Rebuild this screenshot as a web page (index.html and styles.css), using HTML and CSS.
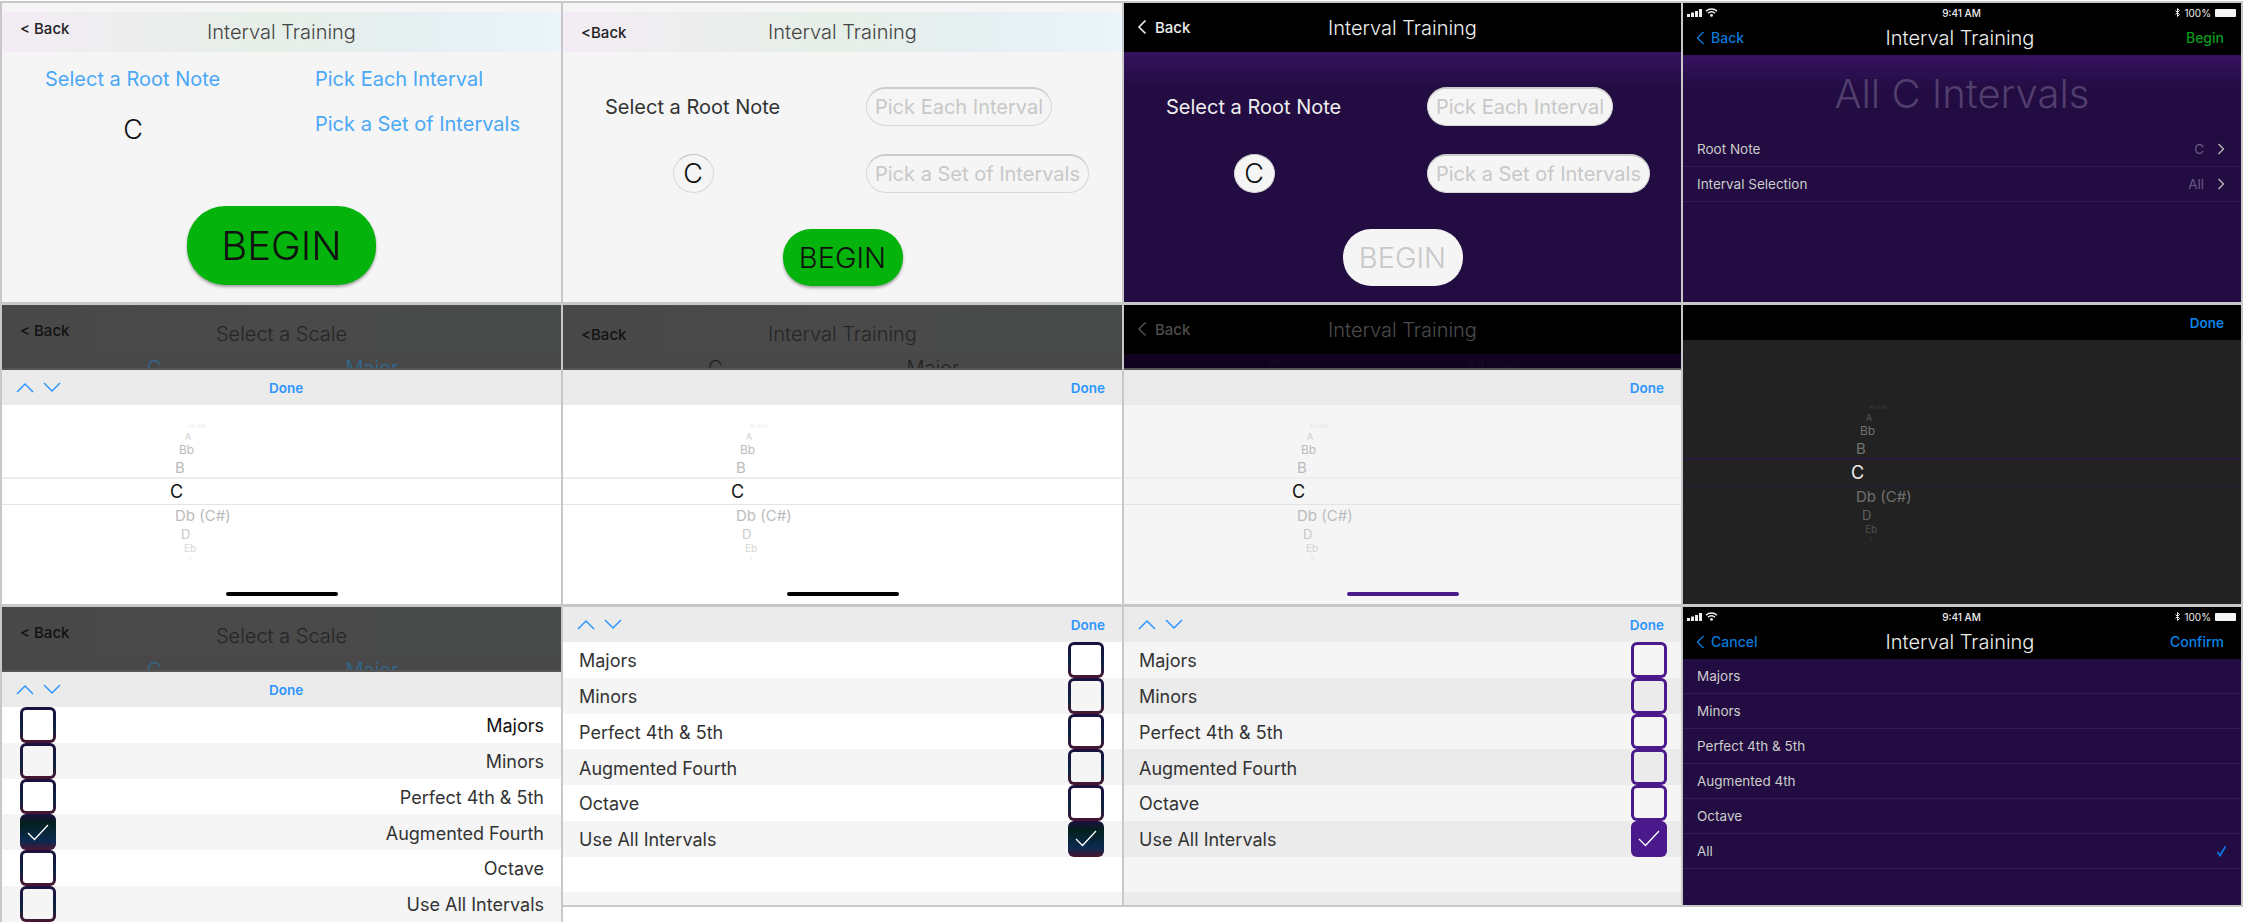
FILE: index.html
```html
<!DOCTYPE html>
<html lang="en">
<head>
    <meta charset="UTF-8">
    <meta name="viewport" content="width=device-width, initial-scale=1.0">
    <title>Interval Training Screens</title>
    <link rel="stylesheet" href="styles.css">
</head>
<body>
<div class="board">

    <!-- row 1: setup screens -->
    <section class="screen light">
        <div class="nav nav-tint">
            <span class="back back-high">&lt; Back</span>
            <span class="title">Interval Training</span>
        </div>
        <div class="setup setup-plain">
            <span class="setup-link">Select a Root Note</span>
            <span class="setup-link">Pick Each Interval</span>
            <span class="note">C</span>
            <span class="setup-link">Pick a Set of Intervals</span>
        </div>
        <div class="begin begin-big">BEGIN</div>
    </section>

    <section class="screen light">
        <div class="nav nav-tint">
            <span class="back">&lt;Back</span>
            <span class="title">Interval Training</span>
        </div>
        <div class="setup">
            <span class="setup-label">Select a Root Note</span>
            <span class="pill">Pick Each Interval</span>
            <span class="note note-round">C</span>
            <span class="pill">Pick a Set of Intervals</span>
        </div>
        <div class="begin">BEGIN</div>
    </section>

    <section class="screen purple">
        <div class="nav nav-black">
            <span class="back back-icon">
                <svg class="chevron-back" width="10" height="16" viewBox="0 0 10 16"><path d="M8.5 1.5 2 8l6.5 6.5"/></svg>
                Back
            </span>
            <span class="title">Interval Training</span>
        </div>
        <div class="setup setup-dark">
            <span class="setup-label">Select a Root Note</span>
            <span class="pill">Pick Each Interval</span>
            <span class="note note-round">C</span>
            <span class="pill">Pick a Set of Intervals</span>
        </div>
        <div class="begin begin-off">BEGIN</div>
    </section>

    <section class="screen ios">
        <div class="status">
            <span class="status-left">
                <svg width="15" height="8" viewBox="0 0 15 8"><rect x="0" y="5" width="3" height="3"/><rect x="4" y="3.5" width="3" height="4.5"/><rect x="8" y="2" width="3" height="6"/><rect x="12" y="0" width="3" height="8"/></svg>
                <svg class="wifi" width="13" height="9" viewBox="0 0 13 9"><path d="M1 3.2C4 .4 9 .4 12 3.2M3 5.2c2-1.8 5-1.8 7 0"/><circle cx="6.5" cy="7.4" r="1.4"/></svg>
            </span>
            <span class="status-time">9:41 AM</span>
            <span class="status-right">
                <svg class="bt" width="5" height="9" viewBox="0 0 5 9"><path d="M.5 2.5l4 4-2 2V.5l2 2-4 4"/></svg>
                100%
                <span class="battery"></span>
            </span>
        </div>
        <div class="nav nav-ios">
            <span class="nav-link">
                <svg class="chevron-ios" width="9" height="14" viewBox="0 0 9 14"><path d="M7.5 1 1.5 7l6 6"/></svg>
                Back
            </span>
            <span class="title">Interval Training</span>
            <span class="nav-action nav-green">Begin</span>
        </div>
        <div class="ios-fill ios-grad">
            <h1 class="summary">All C Intervals</h1>
            <div class="setting">
                <span>Root Note</span>
                <span class="setting-value">C <svg class="chevron-right" width="8" height="12" viewBox="0 0 8 12"><path d="M1.5 1l5 5-5 5"/></svg></span>
            </div>
            <div class="setting">
                <span>Interval Selection</span>
                <span class="setting-value">All <svg class="chevron-right" width="8" height="12" viewBox="0 0 8 12"><path d="M1.5 1l5 5-5 5"/></svg></span>
            </div>
        </div>
    </section>

    <!-- row 2: root note pickers -->
    <section class="screen light">
        <div class="dim">
            <div class="nav nav-dim">
                <span class="back back-high">&lt; Back</span>
                <span class="title">Select a Scale</span>
            </div>
            <div class="peek peek-blue"><span>C</span><span>Major</span></div>
        </div>
        <div class="toolbar toolbar-mid">
            <span class="arrows">
                <svg width="18" height="11" viewBox="0 0 18 11"><path d="M1 10 9 2l8 8"/></svg>
                <svg width="18" height="11" viewBox="0 0 18 11"><path d="M1 1l8 8 8-8"/></svg>
            </span>
            <span class="done">Done</span>
        </div>
        <div class="wheel">
            <span class="tick-far">Ab (G#)</span>
            <span class="tick-a">A</span>
            <span class="tick-bb">Bb</span>
            <span class="tick-b">B</span>
            <span class="tick-c">C</span>
            <span class="tick-db">Db (C#)</span>
            <span class="tick-d">D</span>
            <span class="tick-eb">Eb</span>
            <span class="tick-end">E</span>
            <span class="home-bar"></span>
        </div>
    </section>

    <section class="screen light">
        <div class="dim">
            <div class="nav nav-dim">
                <span class="back">&lt;Back</span>
                <span class="title">Interval Training</span>
            </div>
            <div class="peek"><span>C</span><span>Major</span></div>
        </div>
        <div class="toolbar">
            <span class="done">Done</span>
        </div>
        <div class="wheel">
            <span class="tick-far">Ab (G#)</span>
            <span class="tick-a">A</span>
            <span class="tick-bb">Bb</span>
            <span class="tick-b">B</span>
            <span class="tick-c">C</span>
            <span class="tick-db">Db (C#)</span>
            <span class="tick-d">D</span>
            <span class="tick-eb">Eb</span>
            <span class="tick-end">E</span>
            <span class="home-bar"></span>
        </div>
    </section>

    <section class="screen purple">
        <div class="dim dim-black">
            <div class="nav nav-black nav-faded">
                <span class="back back-icon">
                    <svg class="chevron-back" width="10" height="16" viewBox="0 0 10 16"><path d="M8.5 1.5 2 8l6.5 6.5"/></svg>
                    Back
                </span>
                <span class="title">Interval Training</span>
            </div>
            <div class="peek peek-night"><span>C</span><span>Major</span></div>
        </div>
        <div class="toolbar">
            <span class="done">Done</span>
        </div>
        <div class="wheel wheel-grey">
            <span class="tick-far">Ab (G#)</span>
            <span class="tick-a">A</span>
            <span class="tick-bb">Bb</span>
            <span class="tick-b">B</span>
            <span class="tick-c">C</span>
            <span class="tick-db">Db (C#)</span>
            <span class="tick-d">D</span>
            <span class="tick-eb">Eb</span>
            <span class="tick-end">E</span>
            <span class="home-bar home-bar-purple"></span>
        </div>
    </section>

    <section class="screen ios">
        <div class="toolbar toolbar-black">
            <span class="done">Done</span>
        </div>
        <div class="wheel wheel-dark">
            <span class="tick-far">Ab (G#)</span>
            <span class="tick-a">A</span>
            <span class="tick-bb">Bb</span>
            <span class="tick-b">B</span>
            <span class="tick-c">C</span>
            <span class="tick-db">Db (C#)</span>
            <span class="tick-d">D</span>
            <span class="tick-eb">Eb</span>
            <span class="tick-end">E</span>
        </div>
    </section>

    <!-- row 3: interval lists -->
    <section class="screen light screen-tall">
        <div class="dim">
            <div class="nav nav-dim">
                <span class="back back-high">&lt; Back</span>
                <span class="title">Select a Scale</span>
            </div>
            <div class="peek peek-blue"><span>C</span><span>Major</span></div>
        </div>
        <div class="toolbar toolbar-mid">
            <span class="arrows">
                <svg width="18" height="11" viewBox="0 0 18 11"><path d="M1 10 9 2l8 8"/></svg>
                <svg width="18" height="11" viewBox="0 0 18 11"><path d="M1 1l8 8 8-8"/></svg>
            </span>
            <span class="done">Done</span>
        </div>
        <div class="checklist checklist-flip">
            <div class="check-row"><span class="box"></span><span class="row-text strong">Majors</span></div>
            <div class="check-row"><span class="box"></span><span class="row-text">Minors</span></div>
            <div class="check-row"><span class="box"></span><span class="row-text">Perfect 4th &amp; 5th</span></div>
            <div class="check-row"><span class="box box-on"><svg width="22" height="17" viewBox="0 0 22 17"><path d="M1 9l6.5 6.5L21 1"/></svg></span><span class="row-text">Augmented Fourth</span></div>
            <div class="check-row"><span class="box"></span><span class="row-text">Octave</span></div>
            <div class="check-row"><span class="box"></span><span class="row-text">Use All Intervals</span></div>
        </div>
    </section>

    <section class="screen light screen-short">
        <div class="toolbar">
            <span class="arrows">
                <svg width="18" height="11" viewBox="0 0 18 11"><path d="M1 10 9 2l8 8"/></svg>
                <svg width="18" height="11" viewBox="0 0 18 11"><path d="M1 1l8 8 8-8"/></svg>
            </span>
            <span class="done">Done</span>
        </div>
        <div class="checklist">
            <div class="check-row"><span class="row-text">Majors</span><span class="box"></span></div>
            <div class="check-row"><span class="row-text">Minors</span><span class="box"></span></div>
            <div class="check-row"><span class="row-text">Perfect 4th &amp; 5th</span><span class="box"></span></div>
            <div class="check-row"><span class="row-text">Augmented Fourth</span><span class="box"></span></div>
            <div class="check-row"><span class="row-text">Octave</span><span class="box"></span></div>
            <div class="check-row"><span class="row-text">Use All Intervals</span><span class="box box-on"><svg width="22" height="17" viewBox="0 0 22 17"><path d="M1 9l6.5 6.5L21 1"/></svg></span></div>
            <div class="check-row"></div>
            <div class="check-row"></div>
        </div>
    </section>

    <section class="screen light screen-short">
        <div class="toolbar">
            <span class="arrows">
                <svg width="18" height="11" viewBox="0 0 18 11"><path d="M1 10 9 2l8 8"/></svg>
                <svg width="18" height="11" viewBox="0 0 18 11"><path d="M1 1l8 8 8-8"/></svg>
            </span>
            <span class="done">Done</span>
        </div>
        <div class="checklist checklist-purple">
            <div class="check-row"><span class="row-text">Majors</span><span class="box"></span></div>
            <div class="check-row"><span class="row-text">Minors</span><span class="box"></span></div>
            <div class="check-row"><span class="row-text">Perfect 4th &amp; 5th</span><span class="box"></span></div>
            <div class="check-row"><span class="row-text">Augmented Fourth</span><span class="box"></span></div>
            <div class="check-row"><span class="row-text">Octave</span><span class="box"></span></div>
            <div class="check-row"><span class="row-text">Use All Intervals</span><span class="box box-on"><svg width="22" height="17" viewBox="0 0 22 17"><path d="M1 9l6.5 6.5L21 1"/></svg></span></div>
            <div class="check-row"></div>
            <div class="check-row"></div>
        </div>
    </section>

    <section class="screen ios screen-short">
        <div class="status">
            <span class="status-left">
                <svg width="15" height="8" viewBox="0 0 15 8"><rect x="0" y="5" width="3" height="3"/><rect x="4" y="3.5" width="3" height="4.5"/><rect x="8" y="2" width="3" height="6"/><rect x="12" y="0" width="3" height="8"/></svg>
                <svg class="wifi" width="13" height="9" viewBox="0 0 13 9"><path d="M1 3.2C4 .4 9 .4 12 3.2M3 5.2c2-1.8 5-1.8 7 0"/><circle cx="6.5" cy="7.4" r="1.4"/></svg>
            </span>
            <span class="status-time">9:41 AM</span>
            <span class="status-right">
                <svg class="bt" width="5" height="9" viewBox="0 0 5 9"><path d="M.5 2.5l4 4-2 2V.5l2 2-4 4"/></svg>
                100%
                <span class="battery"></span>
            </span>
        </div>
        <div class="nav nav-ios">
            <span class="nav-link">
                <svg class="chevron-ios" width="9" height="14" viewBox="0 0 9 14"><path d="M7.5 1 1.5 7l6 6"/></svg>
                Cancel
            </span>
            <span class="title">Interval Training</span>
            <span class="nav-action">Confirm</span>
        </div>
        <div class="ios-fill">
            <div class="option">Majors</div>
            <div class="option">Minors</div>
            <div class="option">Perfect 4th &amp; 5th</div>
            <div class="option">Augmented 4th</div>
            <div class="option">Octave</div>
            <div class="option">All <svg class="option-check" width="11" height="12" viewBox="0 0 11 12"><path d="M1.5 7l2.5 3.5L9.5 1.5"/></svg></div>
        </div>
    </section>
</div>
</body>
</html>
```

FILE: styles.css
```css
* {
    box-sizing: border-box;
}

body {
    margin: 0;
    background-color: #fff;
    font-family: 'Inter', 'Liberation Sans', sans-serif;
    color: #333;
}

.board {
    display: grid;
    grid-template-columns: 559px 559px 557px 558px;
    grid-template-rows: 299px 299px 315px;
    column-gap: 2px;
    row-gap: 3px;
    padding: 3px 2px 0;
}

.screen {
    display: flex;
    flex-direction: column;
    overflow: hidden;
    box-shadow: 0 0 0 2px #c8c8c8;
}

.screen-short {
    align-self: start;
    height: 298px;
}

.light {
    background-color: #f5f5f5;
}

.purple {
    background: linear-gradient(#36125f 49px, #220c42 85px);
}

.ios {
    background-color: #000;
    color: #fff;
}

/* nav bars */
.nav {
    display: grid;
    grid-template-columns: 1fr auto 1fr;
    align-items: center;
    flex-shrink: 0;
}

.title {
    font-size: 20px;
    font-weight: 300;
}

.back {
    padding-left: 18px;
    font-size: 15px;
    font-weight: 500;
    color: #222;
}

.back-high {
    margin-bottom: 8px;
}

.back-icon {
    display: flex;
    align-items: center;
    gap: 8px;
    padding-left: 13px;
    margin-bottom: 1px;
    color: #eee;
}

.chevron-back path,
.chevron-ios path,
.chevron-right path,
.option-check path,
.wifi path,
.bt,
.arrows path,
.box path {
    fill: none;
    stroke: currentColor;
}

.chevron-back path {
    stroke-width: 1.6;
}

.nav-tint {
    height: 40px;
    margin-top: 9px;
    background: linear-gradient(90deg, #f3ecf4, #e6efe7 50%, #e5eff0 70%, #ebf4fa);
}

.nav-tint .title {
    color: #444;
}

.nav-black {
    height: 49px;
    background-color: #000;
    color: #eee;
}

.nav-faded,
.nav-faded .back {
    color: #4c4c4c;
}

.nav-dim {
    height: 49px;
    padding-top: 9px;
    background: linear-gradient(90deg, #484848, #4a4a4a 50%, #474a4a);
}

.nav-dim .title {
    color: #262626;
}

.nav-dim .back {
    color: #111;
}

/* setup block */
.setup {
    display: grid;
    grid-template-columns: 176px 1fr;
    grid-template-rows: 39px 39px;
    column-gap: 85px;
    row-gap: 28px;
    align-items: center;
    margin-top: 35px;
    padding-left: 42px;
}

.setup-plain {
    grid-template-rows: 24px 36px;
    column-gap: 94px;
    row-gap: 21px;
    align-items: start;
    margin-top: 15px;
    padding-left: 43px;
}

.setup-link,
.setup-label {
    font-size: 20px;
    white-space: nowrap;
}

.setup-link {
    color: #4aa8f5;
}

.setup-label {
    color: #333;
}

.setup-dark .setup-label {
    color: #eee;
}

.note {
    justify-self: center;
    font-size: 27px;
    font-weight: 300;
    line-height: 36px;
    color: #111;
}

.note-round {
    display: flex;
    align-items: center;
    justify-content: center;
    width: 41px;
    height: 39px;
    border: 1px solid #d8d8d8;
    border-top-color: #c4c4c4;
    border-radius: 50%;
    background-color: #f5f5f5;
}

.pill {
    justify-self: start;
    height: 39px;
    padding: 0 8px;
    border: 1px solid #d8d8d8;
    border-top: 2px solid #ccc;
    border-radius: 20px;
    background-color: #f5f5f5;
    font-size: 20px;
    line-height: 37px;
    color: #c8c8c8;
    white-space: nowrap;
}

.begin {
    align-self: center;
    width: 120px;
    height: 57px;
    margin-top: 36px;
    border-radius: 28px;
    background-color: #04b30b;
    box-shadow: 0 2px 3px rgba(0, 0, 0, 0.35);
    font-size: 29px;
    font-weight: 300;
    line-height: 57px;
    text-align: center;
    color: #111;
}

.begin-big {
    width: 189px;
    height: 79px;
    margin-top: 58px;
    border-radius: 38px;
    font-size: 40px;
    line-height: 79px;
}

.begin-off {
    background-color: #f5f5f5;
    color: #c8c8c8;
    box-shadow: none;
}

/* status bar */
.status {
    display: grid;
    grid-template-columns: 1fr auto 1fr;
    align-items: center;
    height: 19px;
    padding: 0 5px 0 4px;
    flex-shrink: 0;
    font-size: 10px;
    color: #eee;
}

.status svg {
    fill: #eee;
}

.status-left {
    display: flex;
    align-items: center;
    gap: 3px;
}

.status-time {
    font-weight: 500;
}

.status-right {
    display: flex;
    align-items: center;
    justify-content: flex-end;
    gap: 4px;
}

.wifi path {
    stroke-width: 1.5;
}

.bt {
    fill: none !important;
    stroke: #eee;
}

.battery {
    width: 21px;
    height: 8px;
    border-radius: 1px;
    background-color: #f5f5f5;
}

.nav-ios {
    height: 33px;
    padding: 0 17px 2px 13px;
}

.nav-ios .title {
    color: #eee;
}

.nav-link {
    display: flex;
    align-items: center;
    gap: 6px;
    font-size: 14px;
    font-weight: 500;
    color: #0a78d8;
}

.chevron-ios path {
    stroke-width: 1.4;
}

.nav-action {
    justify-self: end;
    font-size: 14px;
    font-weight: 500;
    color: #0a84e8;
}

.nav-green {
    color: #0a9a1e;
}

.ios-fill {
    flex: 1;
    background-color: #220c42;
    font-size: 13.5px;
    color: #ccc;
}

.ios-grad {
    background: linear-gradient(#36125f, #220c42 36px);
}

.summary {
    margin: 16px 0 0;
    height: 61px;
    font-size: 40px;
    font-weight: 300;
    line-height: 46px;
    text-align: center;
    color: #523e6d;
}

.setting {
    display: flex;
    align-items: center;
    justify-content: space-between;
    height: 35px;
    padding: 0 16px 0 14px;
    border-bottom: 1px solid #33185a;
}

.setting-value {
    display: flex;
    align-items: center;
    gap: 13px;
    color: #6c5a84;
}

.chevron-right {
    color: #bbb;
}

.chevron-right path {
    stroke-width: 1.3;
}

.option {
    display: flex;
    align-items: center;
    justify-content: space-between;
    height: 35px;
    padding: 0 14px;
    border-bottom: 1px solid #35195c;
}

.option-check {
    color: #0a78e8;
}

.option-check path {
    stroke-width: 1.8;
}

/* dimmed page behind a sheet */
.dim {
    height: 65px;
    flex-shrink: 0;
    overflow: hidden;
    background-color: #484848;
    border-bottom: 2px solid #555;
}

.dim-black {
    background-color: #0f0320;
}

.peek {
    display: flex;
    gap: 184px;
    margin-top: 2px;
    padding-left: 145px;
    font-size: 20px;
    font-weight: 300;
    line-height: 24px;
    color: #222;
}

.peek-blue {
    color: #2f6a94;
}

.peek-night {
    color: #150a26;
}

.toolbar {
    display: flex;
    align-items: center;
    justify-content: space-between;
    height: 35px;
    flex-shrink: 0;
    padding: 0 17px 0 14px;
    background-color: #ebebeb;
}

.toolbar-black {
    background-color: #000;
}

.toolbar-mid {
    justify-content: flex-start;
}

.toolbar-mid .done {
    margin-left: 208px;
}

.arrows {
    display: flex;
    gap: 9px;
    color: #2d95ff;
}

.arrows path {
    stroke-width: 1.5;
}

.done {
    margin-left: auto;
    font-size: 13.5px;
    font-weight: 600;
    color: #2d95ff;
}

.toolbar-black .done {
    color: #0a84e8;
}

/* picker wheel */
.wheel {
    display: flex;
    flex-direction: column;
    flex: 1;
    padding-top: 16px;
    background-color: #fff;
    color: #bbb;
}

.wheel-grey {
    background-color: #f5f5f5;
}

.wheel-dark {
    padding-top: 62px;
    background-color: #222;
    color: #707070;
}

.wheel > span {
    display: block;
    flex-shrink: 0;
}

.tick-far {
    height: 10px;
    margin-left: 186px;
    font-size: 5px;
    line-height: 10px;
    opacity: 0.3;
}

.tick-a {
    height: 11px;
    margin-left: 183px;
    font-size: 9px;
    line-height: 11px;
    opacity: 0.7;
}

.tick-bb {
    height: 16px;
    margin-left: 177px;
    font-size: 12px;
    line-height: 16px;
}

.tick-b {
    height: 19px;
    margin-left: 173px;
    font-size: 15px;
    line-height: 19px;
}

.tick-c {
    height: 28px;
    padding-left: 168px;
    border-top: 2px solid #eee;
    border-bottom: 1px solid #e4e4e4;
    font-size: 18px;
    line-height: 25px;
    color: #111;
}

.wheel-dark .tick-c {
    border-top-color: #2a1a40;
    border-bottom-color: #2a1a40;
    color: #eee;
}

.tick-db {
    height: 21px;
    margin-left: 173px;
    font-size: 15px;
    line-height: 21px;
}

.tick-d {
    height: 16px;
    margin-left: 179px;
    font-size: 13px;
    line-height: 16px;
    opacity: 0.8;
}

.tick-eb {
    height: 12px;
    margin-left: 182px;
    font-size: 10px;
    line-height: 12px;
    opacity: 0.6;
}

.tick-end {
    height: 8px;
    margin-left: 187px;
    font-size: 5px;
    line-height: 8px;
    opacity: 0.3;
}

.wheel > .home-bar {
    width: 112px;
    height: 4px;
    margin: auto auto 8px;
    border-radius: 2px;
    background-color: #000;
}

.wheel > .home-bar-purple {
    background-color: #4a1a8c;
}

/* checkbox lists */
.checklist {
    --row-a: #fff;
    --row-b: #f5f5f5;
    flex: 1;
    font-size: 18px;
    color: #333;
}

.checklist-purple {
    --row-a: #f5f5f5;
    --row-b: #ebebeb;
}

.check-row {
    --row: var(--row-a);
    display: flex;
    align-items: center;
    justify-content: space-between;
    height: 35.75px;
    padding: 0 18px 0 16px;
    background-color: var(--row);
}

.check-row:nth-child(even) {
    --row: var(--row-b);
}

.checklist-flip .check-row {
    padding: 0 17px 0 18px;
}

.checklist-purple .check-row {
    padding: 0 14px 0 15px;
}

.row-text {
    padding-top: 2px;
}

.strong {
    color: #111;
}

.box {
    display: flex;
    align-items: center;
    justify-content: center;
    width: 36px;
    height: 35.75px;
    border: 3px solid transparent;
    border-radius: 6px;
    background: linear-gradient(var(--row), var(--row)) padding-box,
        linear-gradient(#1c1040, #0c2440 60%, #4a1530) border-box;
    color: #fff;
}

.box-on {
    background: linear-gradient(#1c1040, #03201f 25%, #0c2a50 75%, #4a1530) border-box;
}

.box path {
    stroke-width: 1.3;
}

.checklist-purple .box {
    background: linear-gradient(var(--row), var(--row)) padding-box,
        linear-gradient(#4a1a8c, #4a1a8c) border-box;
}

.checklist-purple .box-on {
    background: #4a1a8c;
}
```
